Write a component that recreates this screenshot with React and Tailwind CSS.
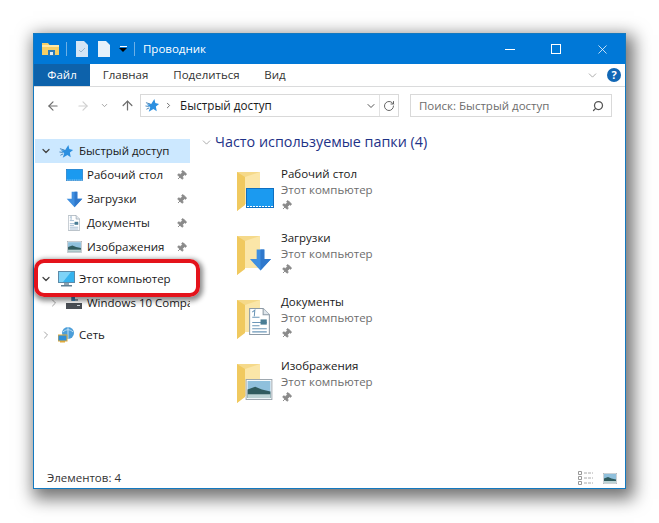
import { ArrowLeft, ArrowRight, ArrowUp, ChevronDown, ChevronRight, RotateCw, Search, X, Pin } from 'lucide-react';

const font = { fontFamily: '"Open Sans", sans-serif' };

function QuickStar({ className }) {
  return (
    <svg viewBox="0 0 16 16" className={className}>
      <path d="M10 1l1 4.4 4 1-3.4 2.6.9 5L9 11.6 4 14.6l1.6-4.8L2 7l4.6-.6z" fill="#2b8fe0" />
      <path d="M1 5l5 1.5M0.5 8.5l3.5 .5M1.5 12l3-1.5" stroke="#3f7fb5" strokeWidth="1" />
    </svg>
  );
}

function DesktopIcon({ className }) {
  return (
    <svg viewBox="0 0 28 20" className={className}>
      <rect x="0.5" y="0.5" width="27" height="19" fill="#1b9af0" stroke="#0f6fc0" />
      <path d="M1 18.5h26" stroke="#ffffff" strokeWidth="1" strokeDasharray="2 1" />
    </svg>
  );
}

function DownloadIcon({ className }) {
  return (
    <svg viewBox="0 0 24 24" className={className}>
      <path d="M8 1h8v10h7L12 23 1 11h7z" fill="#3f8fe0" />
      <path d="M12 1h4v10h7L12 23z" fill="#2f78cc" />
    </svg>
  );
}

function DocIcon({ className }) {
  return (
    <svg viewBox="0 0 20 26" className={className}>
      <path d="M.5.5h13l6 6v19H.5z" fill="#fff" stroke="#8d9aa6" />
      <path d="M3 4l2.5-2L5 8M3 9h7M3 14h14M3 17h7M3 20h14M3 23h14" stroke="#6b96b8" strokeWidth="1" fill="none" />
      <rect x="11" y="11" width="6" height="5" fill="#4a7d95" />
      <path d="M13.5.5v6h6" fill="#dfe6ec" stroke="#8d9aa6" />
    </svg>
  );
}

function PictureIcon({ className }) {
  return (
    <svg viewBox="0 0 28 22" className={className}>
      <rect x="0.5" y="0.5" width="27" height="21" fill="#fff" stroke="#9aa5ad" />
      <rect x="2" y="2" width="24" height="18" fill="#8fc0dc" />
      <path d="M2 11l8-3 7 3 9 2v7H2z" fill="#2f5b5e" />
      <rect x="2" y="16" width="24" height="4" fill="#bcd3d4" />
    </svg>
  );
}

function MonitorIcon() {
  return (
    <svg viewBox="0 0 17 16" className="w-[17px] h-[16px]">
      <rect x="0.5" y="0.5" width="16" height="11" fill="#35b3ee" stroke="#5c8aa8" />
      <path d="M1 1h12L5 11H1z" fill="#7dd3f7" />
      <rect x="6" y="12" width="5" height="2" fill="#8fa3b0" />
      <rect x="3" y="14" width="11" height="1.5" fill="#5f7f94" />
    </svg>
  );
}

function DriveIcon() {
  return (
    <svg viewBox="0 0 16 14" className="w-[16px] h-[14px]">
      <path d="M5 0h3v3h4v2H5z" fill="#8a9aa5" />
      <rect x="6" y="1" width="3" height="4" fill="#3a7fb5" />
      <rect x="0" y="7" width="16" height="6" fill="#4a4f55" />
      <rect x="11" y="9" width="3" height="1" fill="#cfd6db" />
    </svg>
  );
}

function NetworkIcon() {
  return (
    <svg viewBox="0 0 17 16" className="w-[17px] h-[16px]">
      <circle cx="10" cy="6" r="6" fill="#4c9ed9" />
      <path d="M5 5c3-3 7-3 10 0M10 0v12" stroke="#bfe0f5" fill="none" />
      <rect x="0" y="8" width="9" height="6" fill="#2f8fd8" stroke="#e0a93a" />
      <rect x="2" y="14" width="5" height="1.5" fill="#e0a93a" />
    </svg>
  );
}

function FolderBig({ children }) {
  return (
    <div className="relative w-[40px] h-[41px] shrink-0">
      <svg viewBox="0 0 40 41" className="w-[40px] h-[41px]">
        <path d="M1 1h23v32H9l-8 7z" fill="#f5d98a" />
        <path d="M1 1l8 5v28l-8 6z" fill="#f0c95f" />
        <path d="M9 6l15-5v32H9z" fill="#fbe6a8" />
      </svg>
      {children}
    </div>
  );
}

function NavRow({ icon, label, pinned, chevron, active, muted }) {
  return (
    <div className={`h-[24px] flex items-center overflow-hidden text-[11.5px] text-[#1a1a1a] ${active ? 'bg-[#cce8ff]' : ''}`}>
      {chevron === 'down' && <ChevronDown className="w-[12px] h-[12px] ml-[5px] mr-[5px] shrink-0 text-[#444]" strokeWidth={2.5} />}
      {chevron === 'right' && <ChevronRight className={`w-[12px] h-[12px] ml-[5px] mr-[5px] shrink-0 ${muted ? 'text-[#a6a6a6]' : 'text-[#777]'}`} strokeWidth={2} />}
      <div className={`flex items-center gap-[4px] ${chevron ? '' : 'pl-[30px]'}`}>
        {icon}
        <span className="whitespace-nowrap">{label}</span>
      </div>
      {pinned && <Pin className="ml-auto mr-[3px] w-[11px] h-[11px] text-[#8a8a8a] fill-[#8a8a8a] rotate-45" />}
    </div>
  );
}

function SideIcon({ children }) {
  return <div className="w-[18px] h-[18px] flex items-center justify-center shrink-0">{children}</div>;
}

function FolderItem({ name, overlay }) {
  return (
    <div className="h-[64px] flex gap-[5px] pl-[22px]">
      <div className="pt-[5px]">
        <FolderBig>{overlay}</FolderBig>
      </div>
      <div className="flex flex-col text-[11.5px] leading-[16px]">
        <span className="text-[#1a1a1a]">{name}</span>
        <span className="text-[#6d6d6d]">Этот компьютер</span>
        <Pin className="mt-[2px] w-[11px] h-[11px] text-[#8a8a8a] fill-[#8a8a8a] rotate-45" />
      </div>
    </div>
  );
}

export default function App() {
  return (
    <div className="w-[659px] h-[523px] bg-white pl-[33px] pt-[33px] overflow-hidden" style={font}>
      <div className="relative w-[593px] h-[456px] flex flex-col bg-white border border-[#1379c0] shadow-[4px_6px_16px_4px_rgba(0,0,0,0.55)]">
        {/* Title bar */}
        <div className="h-[30px] bg-[#0078d7] flex items-center pl-[8px] text-white shrink-0">
          <svg viewBox="0 0 17 14" className="w-[17px] h-[14px]">
            <path d="M0 1h6l1.5 2H17v10H0z" fill="#f4cf66" />
            <rect x="0" y="3" width="17" height="2" fill="#ffe9a6" />
            <rect x="6" y="8" width="7" height="6" fill="#2a7ab8" />
            <rect x="8" y="10" width="3" height="3" fill="#dcebf5" />
          </svg>
          <div className="w-px h-[14px] bg-[#6db0e6] ml-[7px]" />
          <svg viewBox="0 0 12 16" className="w-[12px] h-[16px] ml-[9px]">
            <path d="M0 0h8l4 4v12H0z" fill="#d5e6f5" />
            <path d="M3 9l2 2 4-4" stroke="#9db8ce" fill="none" />
          </svg>
          <svg viewBox="0 0 12 16" className="w-[12px] h-[16px] ml-[10px]">
            <path d="M0 0h8l4 4v12H0z" fill="#e6f1fa" />
          </svg>
          <div className="ml-[9px] flex flex-col items-center">
            <div className="w-[7px] h-px bg-white mb-[1px]" />
            <div className="w-0 h-0 border-x-[4px] border-x-transparent border-t-[4px] border-t-black" />
          </div>
          <div className="w-px h-[14px] bg-[#6db0e6] ml-[7px]" />
          <span className="ml-[8px] text-[11.5px]">Проводник</span>
          <div className="ml-auto flex items-center">
            <div className="w-[46px] flex justify-center"><div className="w-[10px] h-px bg-white" /></div>
            <div className="w-[46px] flex justify-center"><div className="w-[10px] h-[10px] border border-white" /></div>
            <div className="w-[46px] flex justify-center"><X className="w-[15px] h-[15px]" strokeWidth={1.2} /></div>
          </div>
        </div>

        {/* Ribbon tabs */}
        <div className="h-[23px] flex items-stretch border-b border-[#dadbdc] text-[11.5px] text-[#333] shrink-0">
          <div className="w-[56px] bg-[#0d62ab] text-white flex items-center justify-center">Файл</div>
          <div className="w-[71px] flex items-center justify-center">Главная</div>
          <div className="w-[91px] flex items-center justify-center">Поделиться</div>
          <div className="w-[46px] flex items-center justify-center">Вид</div>
          <div className="ml-auto flex items-center pr-[4px] gap-[8px]">
            <ChevronDown className="w-[13px] h-[13px] text-[#9a9a9a]" strokeWidth={1.5} />
            <div className="w-[14px] h-[14px] rounded-full bg-[#1167b5] text-white text-[11px] font-bold flex items-center justify-center">?</div>
          </div>
        </div>

        {/* Address bar */}
        <div className="h-[37px] flex items-center pl-[12px] pr-[13px] shrink-0">
          <ArrowLeft className="w-[14px] h-[14px] text-[#6e6e6e]" strokeWidth={2} />
          <ArrowRight className="w-[14px] h-[14px] ml-[16px] text-[#d0d0d0]" strokeWidth={2} />
          <ChevronDown className="w-[9px] h-[9px] ml-[10px] text-[#a0a0a0]" strokeWidth={2.5} />
          <ArrowUp className="w-[15px] h-[15px] ml-[11px] text-[#6e6e6e]" strokeWidth={2} />
          <div className="w-[259px] h-[23px] ml-[5px] border border-[#d9d9d9] flex items-center pl-[4px] text-[11.7px] text-[#1a1a1a]">
            <QuickStar className="w-[15px] h-[15px]" />
            <ChevronRight className="w-[9px] h-[9px] ml-[4px] text-[#666]" strokeWidth={2.5} />
            <span className="ml-[7px]">Быстрый доступ</span>
            <div className="ml-auto flex items-center h-full">
              <ChevronDown className="w-[12px] h-[12px] mr-[2px] text-[#555]" strokeWidth={2} />
              <div className="w-px h-full bg-[#e2e2e2]" />
              <RotateCw className="w-[12px] h-[12px] mx-[3px] text-[#666]" strokeWidth={2} />
            </div>
          </div>
          <div className="ml-auto w-[202px] h-[23px] border border-[#d9d9d9] flex items-center pl-[8px] pr-[7px] text-[11.5px] text-[#6d6d6d]">
            <span>Поиск: Быстрый доступ</span>
            <Search className="ml-auto w-[12px] h-[12px] text-[#555] -scale-x-100" strokeWidth={2.5} />
          </div>
        </div>

        {/* Main area */}
        <div className="flex flex-1 min-h-0">
          <div className="w-[156px] shrink-0 pt-[15px] pl-px">
            <NavRow active chevron="down" label="Быстрый доступ" icon={<SideIcon><QuickStar className="w-[15px] h-[15px]" /></SideIcon>} />
            <NavRow pinned label="Рабочий стол" icon={<SideIcon><DesktopIcon className="w-[17px] h-[12px]" /></SideIcon>} />
            <NavRow pinned label="Загрузки" icon={<SideIcon><DownloadIcon className="w-[17px] h-[17px]" /></SideIcon>} />
            <NavRow pinned label="Документы" icon={<SideIcon><DocIcon className="w-[12px] h-[16px]" /></SideIcon>} />
            <NavRow pinned label="Изображения" icon={<SideIcon><PictureIcon className="w-[15px] h-[12px]" /></SideIcon>} />
            <div className="h-[8px]" />
            <NavRow chevron="down" label="Этот компьютер" icon={<SideIcon><MonitorIcon /></SideIcon>} />
            <div className="pl-[8px]">
              <NavRow chevron="right" muted label="Windows 10 Compact (C:)" icon={<SideIcon><DriveIcon /></SideIcon>} />
            </div>
            <div className="h-[8px]" />
            <NavRow chevron="right" muted label="Сеть" icon={<SideIcon><NetworkIcon /></SideIcon>} />
          </div>

          <div className="flex-1 pt-[8px] pl-[10px] min-w-0">
            <div className="flex items-center gap-[2px] h-[20px] text-[14.35px] text-[#1e3287]">
              <ChevronDown className="w-[13px] h-[13px] text-[#8a8a8a]" strokeWidth={1.3} />
              <span>Часто используемые папки (4)</span>
            </div>
            <div className="mt-[14px] pl-[14px]">
              <FolderItem
                name="Рабочий стол"
                overlay={<div className="absolute left-[10px] top-[17px]"><DesktopIcon className="w-[28px] h-[20px]" /></div>}
              />
              <FolderItem
                name="Загрузки"
                overlay={<div className="absolute left-[13px] top-[13px]"><DownloadIcon className="w-[23px] h-[24px]" /></div>}
              />
              <FolderItem
                name="Документы"
                overlay={<div className="absolute left-[13px] top-[9px]"><DocIcon className="w-[21px] h-[27px]" /></div>}
              />
              <FolderItem
                name="Изображения"
                overlay={<div className="absolute left-[9px] top-[16px]"><PictureIcon className="w-[28px] h-[21px]" /></div>}
              />
            </div>
          </div>
        </div>

        {/* Status bar */}
        <div className="h-[22px] flex items-center pl-[13px] pr-[8px] pt-[2px] text-[11.5px] text-[#333] shrink-0">
          <span>Элементов: 4</span>
          <div className="ml-auto flex items-center gap-[10px]">
            <svg viewBox="0 0 15 14" className="w-[15px] h-[14px]">
              <path d="M.5.5h3v3h-3zM.5 5.5h3v3h-3zM.5 10.5h3v3h-3z" fill="none" stroke="#999" />
              <path d="M6 2h9M6 7h9M6 12h9" stroke="#aaa" strokeDasharray="3 1" />
            </svg>
            <PictureIcon className="w-[14px] h-[13px]" />
          </div>
        </div>

        {/* Red highlight over the sidebar row */}
        <div className="absolute left-0 top-[225px] w-[166px] h-[38px] rounded-[10px] border-[4px] border-[#e4131b] shadow-[1px_2px_5px_2px_rgba(0,0,0,0.45)]" />
      </div>
    </div>
  );
}
